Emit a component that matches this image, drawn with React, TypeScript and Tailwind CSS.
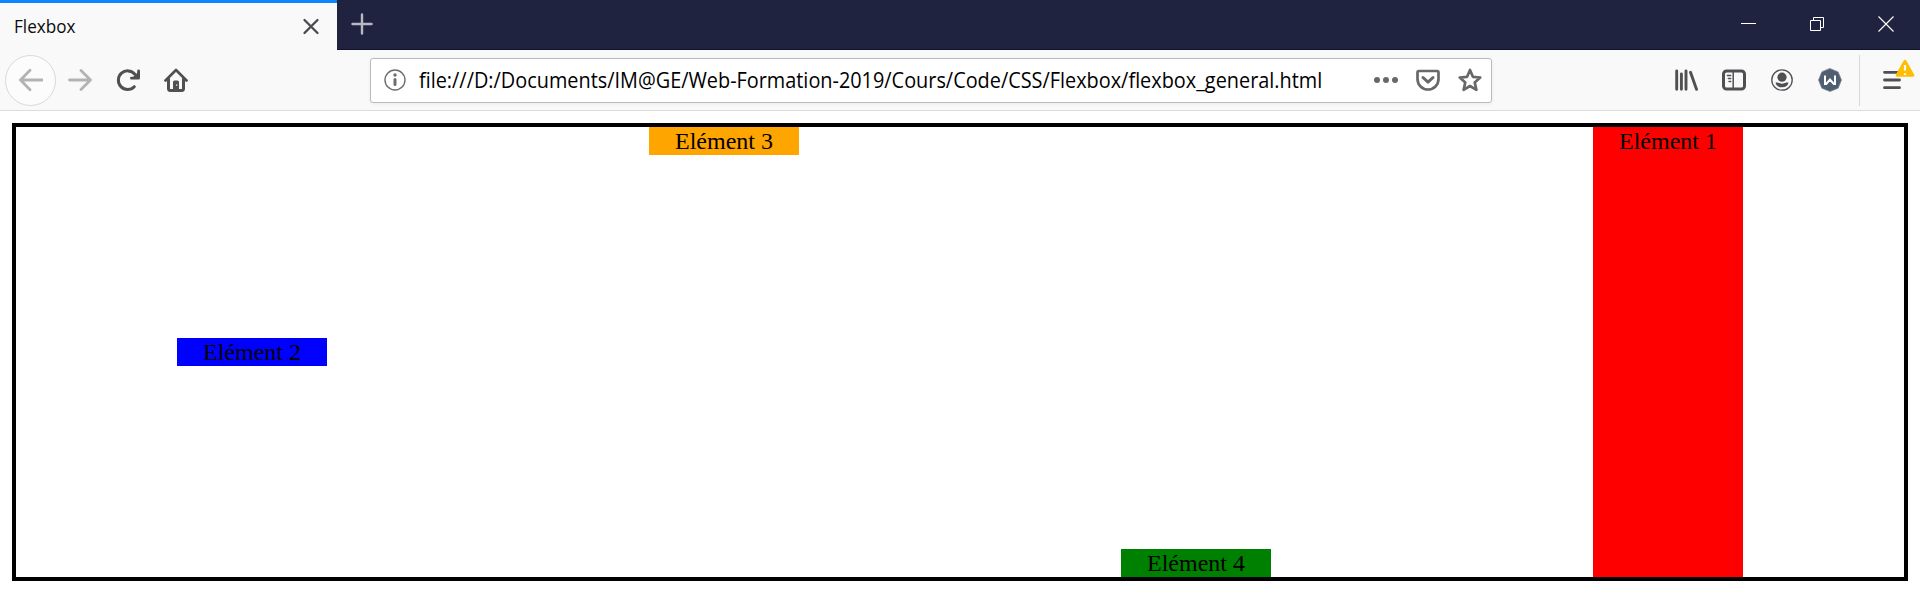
import type { ReactNode } from 'react';

function Icon({ children, className = '' }: { children: ReactNode; className?: string }) {
  return (
    <svg viewBox="0 0 24 24" fill="none" strokeLinecap="round" strokeLinejoin="round" className={`size-6 shrink-0 ${className}`}>
      {children}
    </svg>
  );
}

function TabStrip() {
  return (
    <header className="flex h-[50px] bg-[#202340] shadow-[inset_0_-1px_0_#11132b]">
      <div className="flex w-[337px] items-center justify-between border-t-3 border-[#0a84ff] bg-[#f9f9fa] pb-[2px] pl-[14px] pr-[14px]">
        <span className="origin-left scale-x-[0.95] text-[18px] leading-6 text-[#0c0c0d]">Flexbox</span>
        <Icon className="stroke-[#4a4a4f]">
          <path d="M5.5 6l13 13M18.5 6l-13 13" strokeWidth="2.3" />
        </Icon>
      </div>
      <Icon className="ml-[13px] mt-3 stroke-[#b7b8c3]">
        <path d="M12 2.5v19M2.5 12h19" strokeWidth="2.4" />
      </Icon>
      <div className="ml-auto flex gap-[45px] pr-[22px] pt-3">
        <Icon className="stroke-white">
          <path d="M5 11.5h15" strokeWidth="1" strokeLinecap="butt" />
        </Icon>
        <Icon className="stroke-white">
          <path d="M5.5 8.5h10v10h-10zM8.5 8.5v-3h10v10h-3" strokeWidth="1" strokeLinejoin="miter" strokeLinecap="butt" />
        </Icon>
        <Icon className="stroke-white">
          <path d="M4.5 4.5l15 15M19.5 4.5l-15 15" strokeWidth="1.1" strokeLinecap="butt" />
        </Icon>
      </div>
    </header>
  );
}

function AddressBar() {
  return (
    <div className="ml-[182px] flex h-[45px] w-[1122px] items-center rounded-[3px] border border-[#bbb] bg-white pl-3 pr-[9px] shadow-[0_1px_4px_rgba(0,0,0,0.06)]">
      <Icon className="stroke-[#6d6d6e]">
        <circle cx="12" cy="12" r="10" strokeWidth="1.4" />
        <path d="M12 11.5v5" strokeWidth="3" />
        <circle cx="12" cy="7" r="1.7" fill="#6d6d6e" stroke="none" />
      </Icon>
      <div className="ml-3 w-[930px]">
        <span className="inline-block origin-left scale-x-[0.946] whitespace-nowrap text-[21px] leading-7 text-black">
          file:///D:/Documents/IM@GE/Web-Formation-2019/Cours/Code/CSS/Flexbox/flexbox_general.html
        </span>
      </div>
      <div className="ml-auto flex gap-[18px]">
        <Icon className="fill-[#68686a]">
          <circle cx="3" cy="12" r="3" />
          <circle cx="12" cy="12" r="3" />
          <circle cx="21" cy="12" r="3" />
        </Icon>
        <Icon className="stroke-[#68686a]">
          <path d="M3 3h18q1.5 0 1.5 1.5V11a10.5 10.5 0 0 1-21 0V4.500Q1.500 3 3 3z" strokeWidth="2.700" />
          <path d="M7 9.500l5 4.700 5-4.700" strokeWidth="3" />
        </Icon>
        <Icon className="stroke-[#68686a]">
          <path d="M12 2l2.900 6.800 7.300.700-5.500 4.900 1.700 7.400L12 18l-6.400 3.800 1.700-7.400-5.500-4.900 7.300-.700z" strokeWidth="2.700" />
        </Icon>
      </div>
    </div>
  );
}

function Toolbar() {
  return (
    <nav className="flex h-[61px] items-center border-b border-[#dcdcdd] bg-[#f9f9fa] pl-[5px] pr-4">
      <button className="flex size-[51px] items-center justify-center rounded-full border border-[#d9d9da] bg-[#fcfcfc]" aria-label="Back">
        <Icon className="stroke-[#b3b3b4]">
          <path d="M23.500 12H1.500M11 2.200L1.500 12l9.500 9.800" strokeWidth="2.800" />
        </Icon>
      </button>
      <Icon className="ml-3 stroke-[#b3b3b4]">
        <path d="M1.500 12h21M13 2.500l9.500 9.500-9.500 9.500" strokeWidth="2.800" />
      </Icon>
      <Icon className="ml-6 stroke-[#505053]">
        <path d="M18.300 18.700a9.300 9.300 0 1 1 .5-12.500" strokeWidth="3" />
        <path d="M22.600 3v7.200h-7.200" strokeWidth="2.800" />
        <path d="M22.600 4.500v5.700h-5.700z" fill="#505053" strokeWidth="1.500" />
      </Icon>
      <Icon className="ml-6 stroke-[#505053]">
        <path d="M1.500 12.500L12 2l10.500 10.500" strokeWidth="2.700" />
        <path d="M4.500 11v9.500q0 2 2 2h11q2 0 2-2V11" strokeWidth="3" />
        <path d="M9 21.500V14q0-1.500 1.500-1.500h3q1.500 0 1.500 1.500v7.500z" fill="#505053" stroke="none" />
        <path d="M12.800 16.300v1.600" stroke="#f9f9fa" strokeWidth="1" strokeLinecap="butt" />
      </Icon>
      <AddressBar />
      <div className="ml-auto flex items-center gap-6">
        <Icon className="stroke-[#505053]">
          <path d="M2.700 3v18.300M7.400 6v15.300M12 3v18.300M16.500 4.300l6 17" strokeWidth="2.900" />
        </Icon>
        <Icon className="stroke-[#505053]">
          <rect x="1.500" y="3" width="21" height="18" rx="3" strokeWidth="3" />
          <path d="M11.200 3v18" strokeWidth="1.500" />
          <path d="M5.300 7.500h3.500M6.300 10.500h2.500M7 13.500h1.800" strokeWidth="1.300" />
        </Icon>
        <Icon className="stroke-[#505053]">
          <circle cx="12" cy="12" r="10.200" strokeWidth="1.300" />
          <circle cx="12" cy="9.200" r="4.600" fill="#505053" stroke="none" />
          <path d="M5.500 14.500h2.300q4.200 2.300 8.400 0h2.300q-.8 4.800-6.500 4.800t-6.500-4.800z" fill="#505053" stroke="none" />
        </Icon>
        <Icon>
          <path d="M12 .5l8.200 3.400L23.500 12l-3.300 8.200L12 23.500l-8.200-3.300L.5 12l3.300-8.100z" fill="#505f70" stroke="#7c8897" strokeWidth=".7" />
          <path d="M7 7.500v8.500h1.200L12 11.500l3.800 4.500H17V7.500" stroke="white" strokeWidth="2" strokeLinejoin="miter" strokeLinecap="butt" />
        </Icon>
      </div>
      <div className="ml-[17px] h-[51px] w-px bg-[#d8d8d9]" />
      <div className="relative ml-5 size-6">
        <Icon className="stroke-[#505053]">
          <path d="M4.500 4.300h15M4.500 12h15M4.500 19.700h15" strokeWidth="2.800" />
        </Icon>
        <svg viewBox="0 0 20 19" className="absolute -top-[9px] left-[15px] h-[19px] w-5">
          <path d="M10 2.200L17.800 16.300H2.200z" fill="#ffbf00" stroke="#ffbf00" strokeWidth="3" strokeLinejoin="round" />
          <path d="M10 6v5.500M10 14.200v1.800" stroke="white" strokeWidth="2.200" />
        </svg>
      </div>
    </nav>
  );
}

const itemClass = 'w-[150px] text-center';

export default function App() {
  return (
    <div className="h-[612px] w-[1920px] overflow-hidden bg-white font-['Open_Sans','Noto_Sans',sans-serif]">
      <TabStrip />
      <Toolbar />
      <main className="mx-3 mt-3 flex h-[458px] justify-around border-4 border-black font-['Liberation_Serif',serif] text-[24px] leading-7 text-black">
        <div className={`${itemClass} self-center bg-[#0000ff]`}>Elément 2</div>
        <div className={`${itemClass} self-start bg-[#ffa500]`}>Elément 3</div>
        <div className={`${itemClass} self-end bg-[#008000]`}>Elément 4</div>
        <div className={`${itemClass} self-stretch bg-[#ff0000]`}>Elément 1</div>
      </main>
    </div>
  );
}
